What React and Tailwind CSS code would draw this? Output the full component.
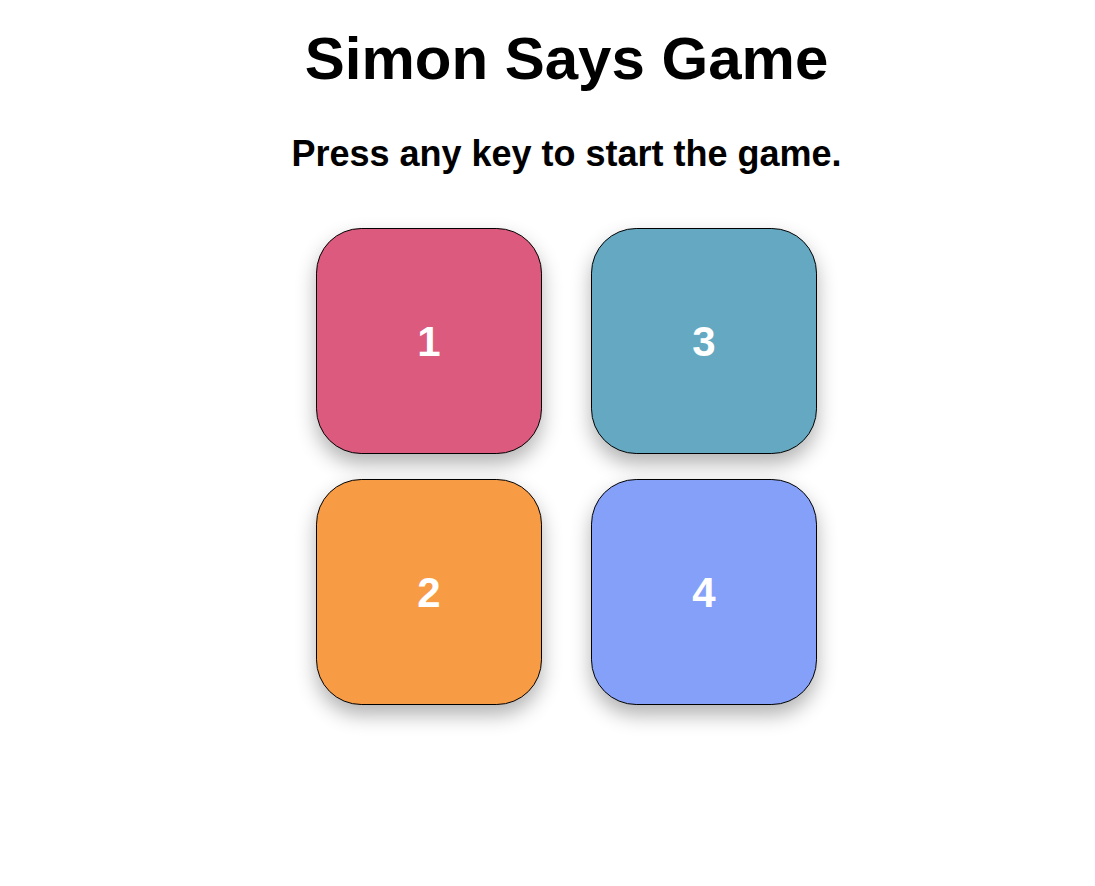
import React from 'react';

// Simon Says board: title, status line and four coloured pads
const pads = [
  { n: 1, color: 'bg-[#db5a7e]' },
  { n: 3, color: 'bg-[#64a9c1]' },
  { n: 2, color: 'bg-[#f89b45]' },
  { n: 4, color: 'bg-[#84a0f8]' },
];

const App = () => {
  return (
    <div className="min-h-screen bg-white text-black font-['Liberation_Sans',Arial,sans-serif] flex flex-col items-center pl-[38px]">
      <h1 className="mt-[29px] text-[60px] font-bold leading-none">Simon Says Game</h1>
      <h2 className="mt-[47px] text-[36px] font-bold leading-none">Press any key to start the game.</h2>

      <div className="mt-[56px] grid grid-cols-2 gap-x-[49px] gap-y-[25px]">
        {pads.map((p) => (
          <div
            key={p.n}
            className={`${p.color} w-[226px] h-[226px] rounded-[20%] border border-black shadow-[0_10px_20px_rgba(0,0,0,0.3)] flex items-center justify-center text-white text-[42px] font-bold`}
          >
            {p.n}
          </div>
        ))}
      </div>
    </div>
  );
};

export default App;
